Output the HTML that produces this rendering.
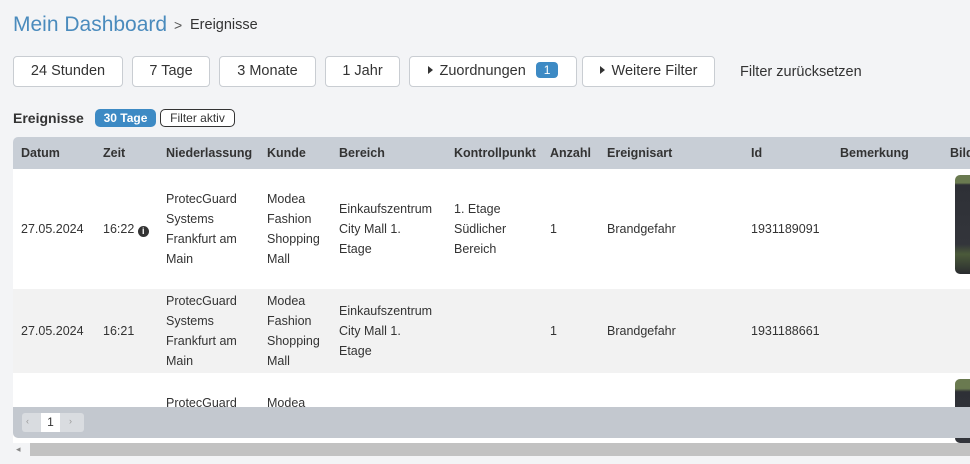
<!DOCTYPE html>
<html><head><meta charset="utf-8"><style>
*{box-sizing:border-box;margin:0;padding:0}
body{width:970px;height:464px;overflow:hidden;background:#f3f4f6;font-family:"Liberation Sans",sans-serif;color:#333;position:relative}
.abs{position:absolute;white-space:nowrap}
.btn{position:absolute;top:56px;height:31px;border:1px solid #c9cdd2;border-radius:4px;background:#fff;font-size:14.5px;color:#333;text-align:center;line-height:29px}
.th{position:absolute;top:146px;font-size:12.5px;font-weight:bold;color:#333}
.c{position:absolute;font-size:12.5px;line-height:20px;color:#333}
.tri{display:inline-block;width:0;height:0;border-left:5px solid #333;border-top:4px solid transparent;border-bottom:4px solid transparent;margin-right:7px;vertical-align:1px}
</style></head><body>
<div class="abs" style="left:13px;top:13px;font-size:21px;color:#4a8bbd">Mein Dashboard</div>
<div class="abs" style="left:174px;top:17px;font-size:14px;color:#555">&gt;</div>
<div class="abs" style="left:190px;top:17px;font-size:14.5px;color:#333">Ereignisse</div>

<div class="btn" style="left:13px;width:110px">24 Stunden</div>
<div class="btn" style="left:132px;width:78px">7 Tage</div>
<div class="btn" style="left:219px;width:97px">3 Monate</div>
<div class="btn" style="left:325px;width:75px">1 Jahr</div>
<div class="btn" style="left:409px;width:168px"><span class="tri"></span>Zuordnungen <span style="display:inline-block;background:#3d8ac4;color:#fff;border-radius:4px;font-size:12px;line-height:16px;padding:0 8px;margin-left:6px;vertical-align:1px">1</span></div>
<div class="btn" style="left:582px;width:133px"><span class="tri"></span>Weitere Filter</div>
<div class="abs" style="left:740px;top:64px;font-size:14.5px;color:#333">Filter zurücksetzen</div>

<div class="abs" style="left:13px;top:110px;font-size:14px;font-weight:bold;color:#333">Ereignisse</div>
<div class="abs" style="left:95px;top:109px;width:61px;height:18px;background:#3d8ac4;color:#fff;border-radius:5px;font-size:12px;font-weight:bold;text-align:center;line-height:18px">30 Tage</div>
<div class="abs" style="left:160px;top:109px;width:75px;height:18px;border:1px solid #333;border-radius:5px;background:#fff;font-size:12px;text-align:center;line-height:16px">Filter aktiv</div>

<div class="abs" style="left:13px;top:137px;width:957px;height:32px;background:#c8ced6;border-radius:5px 0 0 0"></div>
<div class="th" style="left:21px">Datum</div>
<div class="th" style="left:103px">Zeit</div>
<div class="th" style="left:166px">Niederlassung</div>
<div class="th" style="left:267px">Kunde</div>
<div class="th" style="left:339px">Bereich</div>
<div class="th" style="left:454px">Kontrollpunkt</div>
<div class="th" style="left:550px">Anzahl</div>
<div class="th" style="left:607px">Ereignisart</div>
<div class="th" style="left:751px">Id</div>
<div class="th" style="left:840px">Bemerkung</div>
<div class="th" style="left:950px">Bild</div>

<div class="abs" style="left:13px;top:169px;width:957px;height:120px;background:#fff"></div>
<div class="abs" style="left:13px;top:289px;width:957px;height:84px;background:#f2f2f2"></div>
<div class="abs" style="left:13px;top:373px;width:957px;height:70px;background:#fff"></div>

<div class="c" style="left:21px;top:219px">27.05.2024</div>
<div class="c" style="left:103px;top:219px">16:22 <span style="display:inline-block;width:11px;height:11px;border-radius:50%;background:#333;color:#fff;font-size:9px;line-height:11px;text-align:center;font-weight:bold;vertical-align:-1px">i</span></div>
<div class="c" style="left:166px;top:189px">ProtecGuard<br>Systems<br>Frankfurt am<br>Main</div>
<div class="c" style="left:267px;top:189px">Modea<br>Fashion<br>Shopping<br>Mall</div>
<div class="c" style="left:339px;top:199px">Einkaufszentrum<br>City Mall 1.<br>Etage</div>
<div class="c" style="left:454px;top:199px">1. Etage<br>Südlicher<br>Bereich</div>
<div class="c" style="left:550px;top:219px">1</div>
<div class="c" style="left:607px;top:219px">Brandgefahr</div>
<div class="c" style="left:751px;top:219px">1931189091</div>
<div class="abs" style="left:955px;top:175px;width:20px;height:99px;border-radius:5px;background:linear-gradient(#6a7a50 0,#6a7a50 8%,#2e3036 10%,#33353b 70%,#4b5a3a 80%,#2a2c30 100%)"></div>

<div class="c" style="left:21px;top:321px">27.05.2024</div>
<div class="c" style="left:103px;top:321px">16:21</div>
<div class="c" style="left:166px;top:291px">ProtecGuard<br>Systems<br>Frankfurt am<br>Main</div>
<div class="c" style="left:267px;top:291px">Modea<br>Fashion<br>Shopping<br>Mall</div>
<div class="c" style="left:339px;top:301px">Einkaufszentrum<br>City Mall 1.<br>Etage</div>
<div class="c" style="left:550px;top:321px">1</div>
<div class="c" style="left:607px;top:321px">Brandgefahr</div>
<div class="c" style="left:751px;top:321px">1931188661</div>

<div class="c" style="left:166px;top:393px">ProtecGuard</div>
<div class="c" style="left:267px;top:393px">Modea</div>
<div class="abs" style="left:955px;top:379px;width:20px;height:64px;border-radius:5px;background:linear-gradient(#6a7a50 0,#6a7a50 15%,#2e3036 20%,#33353b 100%)"></div>

<div class="abs" style="left:13px;top:407px;width:957px;height:31px;background:#c3c8cf;border-radius:0 0 0 5px"></div>
<div class="abs" style="left:22px;top:413px;width:62px;height:19px;background:#d9dce0;border-radius:3px"></div>
<div class="abs" style="left:41px;top:413px;width:19px;height:19px;background:#fff;font-size:12px;text-align:center;line-height:19px">1</div>
<div class="abs" style="left:26px;top:416px;font-size:9px;color:#999">‹</div>
<div class="abs" style="left:69px;top:416px;font-size:9px;color:#999">›</div>

<div class="abs" style="left:16px;top:444px;font-size:9px;color:#888">◂</div>
<div class="abs" style="left:30px;top:443px;width:940px;height:13px;background:#c2c2c2"></div>
</body></html>
